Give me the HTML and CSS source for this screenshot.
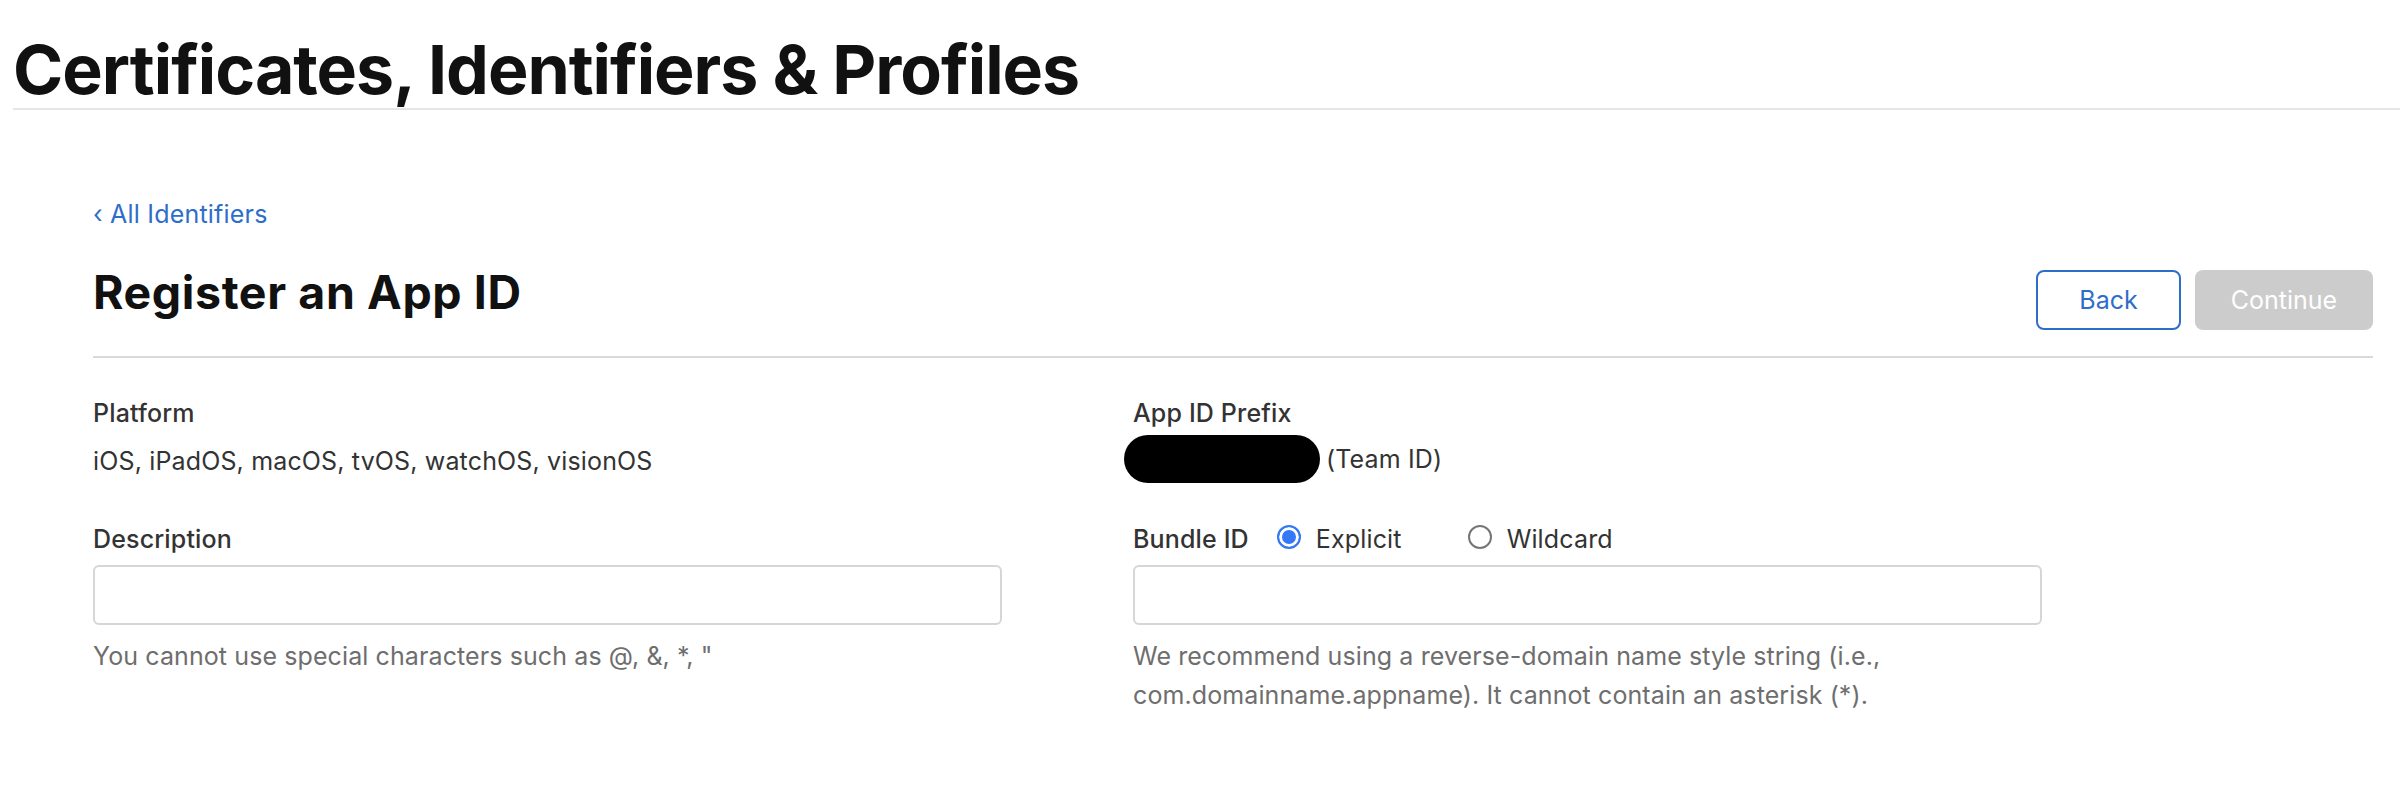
FILE: index.html
```html
<!DOCTYPE html>
<html lang="en">
<head>
<meta charset="utf-8">
<title>Register an App ID</title>
<link rel="stylesheet" href="styles.css">
</head>
<body>
<header class="site-header">
  <h1 class="site-title">Certificates, Identifiers &amp; Profiles</h1>
</header>
<main class="content">
  <a class="back-link" href="#"><span class="chev">‹</span> All Identifiers</a>
  <div class="page-head">
    <h2 class="page-title">Register an App ID</h2>
    <div class="actions">
      <button class="btn btn-outline">Back</button>
      <button class="btn btn-disabled">Continue</button>
    </div>
  </div>
  <div class="form-grid">
    <div class="field">
      <div class="label">Platform</div>
      <div class="value">iOS, iPadOS, macOS, tvOS, watchOS, visionOS</div>
    </div>
    <div class="field">
      <div class="label label-tight">App ID Prefix</div>
      <div class="prefix-row"><span class="redact"></span><span class="value">(Team ID)</span></div>
    </div>
    <div class="field">
      <div class="label label-input">Description</div>
      <input class="text-input" type="text">
      <p class="help">You cannot use special characters such as @, &amp;, *, "</p>
    </div>
    <div class="field">
      <div class="label-row">
        <span class="label">Bundle ID</span>
        <label class="radio-opt"><span class="radio radio-on"></span>Explicit</label>
        <label class="radio-opt radio-opt-2"><span class="radio"></span>Wildcard</label>
      </div>
      <input class="text-input" type="text">
      <p class="help">We recommend using a reverse-domain name style string (i.e.,<br>com.domainname.appname). It cannot contain an asterisk (*).</p>
    </div>
  </div>
</main>
</body>
</html>
```
FILE: styles.css
```css
* { box-sizing: border-box; }
html, body { margin: 0; padding: 0; background: #fff; }
body {
  font-family: Inter, "Noto Sans", "Liberation Sans", sans-serif;
  color: #333;
  width: 2400px;
}
.site-header {
  margin-left: 13px;
  padding-top: 31px;
  border-bottom: 2px solid #e6e6e6;
}
.site-title {
  margin: 0;
  font-size: 68px;
  line-height: 77px;
  font-weight: 700;
  color: #111;
  letter-spacing: -1px;
}
.content {
  padding-left: 93px;
  width: 2373px;
}
.back-link {
  display: block;
  margin-top: 86px;
  font-size: 25px;
  line-height: 36px;
  letter-spacing: 0.2px;
  color: #2d6ec9;
  text-decoration: none;
}
.page-head {
  display: flex;
  justify-content: space-between;
  align-items: flex-start;
  margin-top: 32px;
  padding-bottom: 26px;
  border-bottom: 2px solid #dadada;
}
.page-title {
  margin: 0;
  font-size: 46.5px;
  line-height: 56px;
  font-weight: 700;
  letter-spacing: 0.6px;
  color: #111;
}
.actions {
  display: flex;
  gap: 14px;
  margin-top: 6px;
}
.btn {
  height: 60px;
  border-radius: 8px;
  font-family: inherit;
  font-size: 25px;
  padding: 0;
}
.btn-outline {
  width: 145px;
  background: #fff;
  border: 2px solid #2d6ec9;
  color: #2d6ec9;
}
.btn-disabled {
  width: 178px;
  background: #cccccc;
  border: none;
  color: #fff;
}
.form-grid {
  display: grid;
  grid-template-columns: 1040px 1040px;
  row-gap: 38px;
  margin-top: 37px;
}
.label {
  font-size: 25px;
  line-height: 36px;
  font-weight: 500;
  letter-spacing: 0.15px;
  color: #333;
  margin-bottom: 12px;
}
.label-tight { margin-bottom: 4px; }
.label-input { margin-bottom: 8px; }
.value {
  font-size: 25px;
  line-height: 36px;
  letter-spacing: 0.15px;
  color: #333;
}
.field > .value { margin-top: 2px; }
.prefix-row {
  display: flex;
  align-items: center;
  gap: 6px;
}
.redact {
  display: block;
  width: 196px;
  height: 48px;
  border-radius: 24px;
  background: #000;
  margin-left: -9px;
}
.label-row {
  display: flex;
  align-items: center;
  margin-bottom: 8px;
}
.label-row .label { margin-bottom: 0; margin-right: 28px; }
.radio-opt {
  display: flex;
  align-items: center;
  font-size: 25px;
  line-height: 36px;
  letter-spacing: 0.15px;
  color: #333;
}
.radio-opt-2 { margin-left: 66px; }
.radio {
  display: inline-block;
  width: 24px;
  height: 24px;
  border-radius: 50%;
  border: 2px solid #767676;
  background: #fff;
  margin-right: 15px;
  margin-top: -5px;
}
.radio-on {
  border-color: #3478f6;
  background: #3478f6;
  box-shadow: inset 0 0 0 3px #fff;
}
.text-input {
  display: block;
  width: 909px;
  height: 60px;
  border: 2px solid #d6d6d6;
  border-radius: 6px;
  background: #fff;
  font-family: inherit;
  font-size: 25px;
  padding: 0 14px;
}
.help {
  margin: 12px 0 0;
  font-size: 25px;
  line-height: 39px;
  letter-spacing: 0.1px;
  color: #6e6e6e;
}
```
